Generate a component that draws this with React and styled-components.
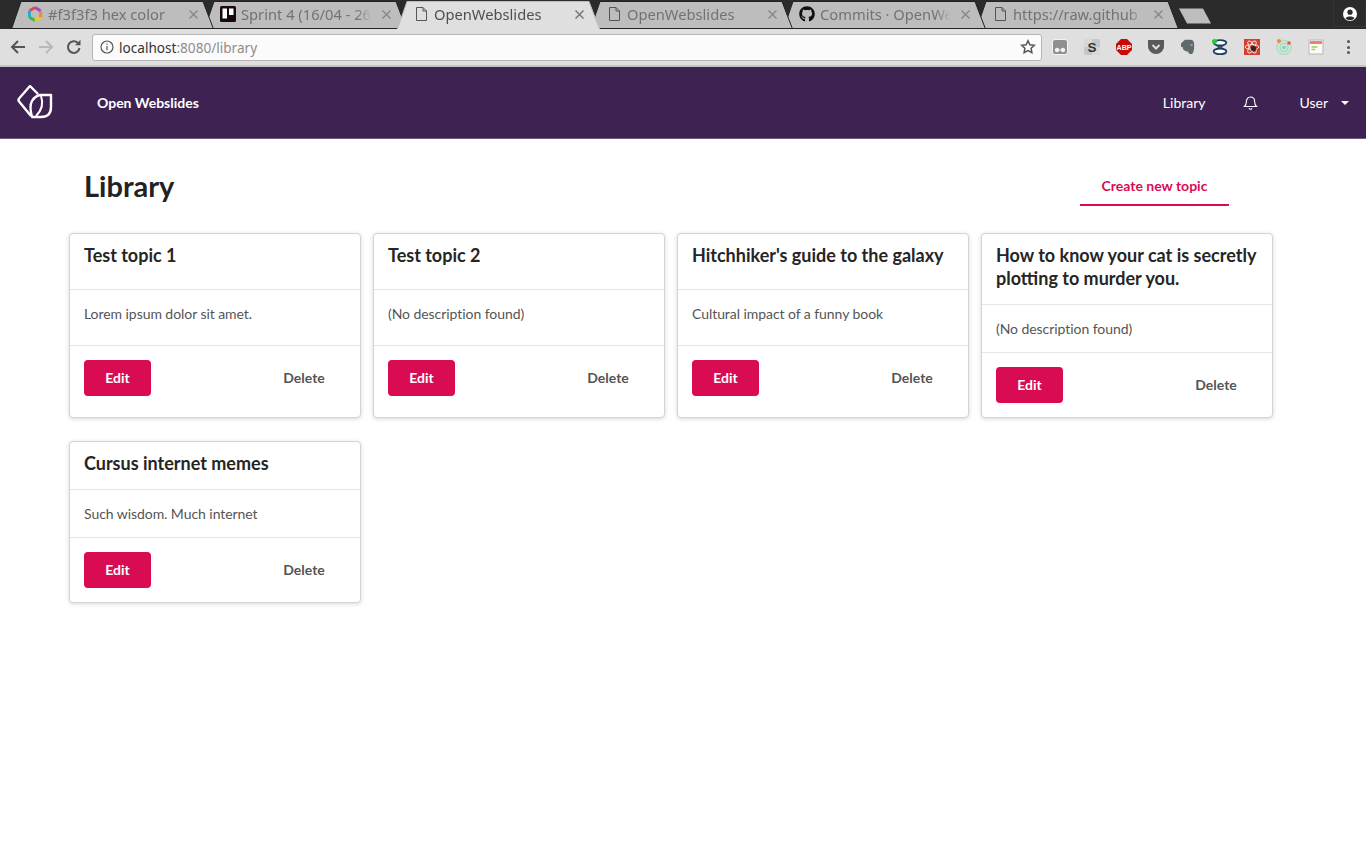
import React from "react";
import styled, { createGlobalStyle } from "styled-components";
import { FaGithub } from "react-icons/fa";

const Global = createGlobalStyle`
  html, body { margin: 0; padding: 0; background: #fff; }
  * { box-sizing: border-box; }
  body { font-family: "Lato", "Noto Sans", sans-serif; }
`;

const Page = styled.div`
  width: 1366px;
  min-height: 856px;
  background: #fff;
  display: flex;
  flex-direction: column;
`;

/* Browser chrome */
const TabStrip = styled.div`
  height: 29px;
  background: #2b2b2b;
  display: flex;
  padding-left: 11px;
  position: relative;
  border-top: 1px solid #2b2b2b;
`;
const Tab = styled.div`
  position: relative;
  width: 203px;
  height: 28px;
  margin-right: -10px;
  flex: none;
  z-index: ${(p) => (p.$active ? 20 : 10 - p.$index)};
  display: flex;
  align-items: center;
  padding: 0 14px 2px 16px;
  font: 14.7px "Noto Sans", "Open Sans", sans-serif;
  color: ${(p) => (p.$active ? "#4f4f4f" : "#727272")};
`;
const TabShape = styled.svg`
  position: absolute;
  left: 0;
  top: 0;
  width: 203px;
  height: 28px;
  z-index: -1;
`;
const TabIcon = styled.span`
  width: 16px;
  height: 16px;
  flex: none;
  display: flex;
  align-items: center;
  justify-content: center;
  color: #111;
`;
const TabTitle = styled.span`
  flex: 1;
  margin-left: 5px;
  white-space: nowrap;
  overflow: hidden;
  -webkit-mask-image: linear-gradient(to right, #000 88%, transparent 100%);
  mask-image: linear-gradient(to right, #000 88%, transparent 100%);
`;
const TabClose = styled.svg`
  width: 9px;
  height: 9px;
  flex: none;
  margin-left: 10px;
  margin-right: 2px;
`;
const NewTab = styled.svg`
  width: 33px;
  height: 16px;
  flex: none;
  margin: 7px 0 0 10px;
`;
const ProfileBox = styled.div`
  margin-left: auto;
  width: 33px;
  height: 26px;
  background: #2b2b2b;
  border: 1px solid #353535;
  border-top: 0;
  display: flex;
  align-items: center;
  justify-content: center;
`;

const Toolbar = styled.div`
  height: 38px;
  background: #dfdfdf;
  border-bottom: 2px solid #c4c4c4;
  display: flex;
  align-items: center;
  padding-left: 9px;
`;
const NavButton = styled.svg`
  width: 18px;
  height: 18px;
  flex: none;
  margin-right: 10px;
`;
const AddressBar = styled.div`
  width: 950px;
  height: 27px;
  margin-left: -1px;
  background: #fbfbfb;
  border: 1px solid #b5b5b5;
  border-radius: 3px;
  display: flex;
  align-items: center;
  padding: 0 5px 0 7px;
  font: 13.6px "Noto Sans", "Open Sans", sans-serif;
`;
const Host = styled.span`
  color: #333;
  margin-left: 5px;
`;
const UrlRest = styled.span`
  color: #8d8d8d;
`;
const Star = styled.svg`
  width: 16px;
  height: 16px;
  margin-left: auto;
`;
const Extensions = styled.div`
  display: flex;
  align-items: center;
  margin-left: 10px;
  gap: 16px;
`;
const Ext = styled.svg`
  width: 16px;
  height: 16px;
  flex: none;
`;
const MenuDots = styled.div`
  display: flex;
  flex-direction: column;
  gap: 2.5px;
  margin-left: 23px;
`;
const Dot = styled.i`
  width: 3px;
  height: 3px;
  border-radius: 50%;
  background: #555;
  display: block;
`;

/* App nav */
const TopBar = styled.header`
  height: 72px;
  background: #3e2352;
  border-bottom: 1px solid #6e5a7d;
  display: flex;
  align-items: center;
  color: #fff;
  font-size: 14px;
  padding: 0 17px;
`;
const Logo = styled.svg`
  width: 36px;
  height: 34px;
  flex: none;
  margin-bottom: 2px;
`;
const Brand = styled.a`
  font-weight: 700;
  margin-left: 44px;
`;
const NavRight = styled.nav`
  margin-left: auto;
  display: flex;
  align-items: center;
`;
const NavLink = styled.a`
  font-weight: 400;
`;
const BellIcon = styled.svg`
  width: 15px;
  height: 15px;
  margin-left: 38px;
`;
const UserMenu = styled.a`
  margin-left: 41px;
  display: flex;
  align-items: center;
`;
const Caret = styled.i`
  width: 0;
  height: 0;
  margin-left: 13px;
  border-left: 4px solid transparent;
  border-right: 4px solid transparent;
  border-top: 4px solid #fff;
`;

/* Content */
const Main = styled.main`
  padding: 28px 0 0 69px;
  width: 1273px;
`;
const PageHeader = styled.div`
  display: flex;
  align-items: center;
  justify-content: space-between;
  padding: 0 44px 0 15px;
  height: 39px;
  margin-bottom: 27px;
`;
const Title = styled.h1`
  margin: 0;
  padding-bottom: 2px;
  font-size: 29px;
  font-weight: 700;
  color: #222;
`;
const CreateButton = styled.a`
  width: 149px;
  height: 39px;
  display: flex;
  align-items: center;
  justify-content: center;
  font-size: 14px;
  font-weight: 700;
  color: #d80b53;
  border-bottom: 2px solid #d80b53;
`;
const Grid = styled.div`
  display: grid;
  grid-template-columns: repeat(4, 292px);
  column-gap: 12px;
  row-gap: 23px;
  align-items: stretch;
`;
const Card = styled.article`
  display: flex;
  flex-direction: column;
  background: #fff;
  border: 1px solid #d4d4d4;
  border-radius: 4px;
  box-shadow: 0 1px 4px rgba(0, 0, 0, 0.16);
`;
const CardHead = styled.div`
  flex: 1 1 auto;
  padding: 10px 14px 14px;
  border-bottom: 1px solid #e6e6e6;
`;
const CardTitle = styled.h2`
  margin: 0;
  font-size: 18px;
  line-height: 23px;
  font-weight: 700;
  color: #252525;
`;
const CardBody = styled.div`
  flex: 1.15 1 auto;
  padding: 14px;
  font-size: 14px;
  letter-spacing: -0.06px;
  line-height: 19px;
  color: #555;
  border-bottom: 1px solid #e6e6e6;
`;
const CardFoot = styled.div`
  flex: 0.9 1 auto;
  padding: 14px;
  display: flex;
  align-items: flex-start;
  justify-content: space-between;
`;
const EditButton = styled.button`
  width: 67px;
  height: 36px;
  border: 0;
  padding: 0 0 2px;
  border-radius: 4px;
  background: #d80b53;
  color: #fff;
  font: 700 14px "Lato", sans-serif;
`;
const DeleteButton = styled.button`
  width: 84px;
  height: 36px;
  border: 0;
  padding: 0 0 2px;
  background: transparent;
  color: #555;
  font: 700 14px "Lato", sans-serif;
`;

const PageIcon = () => (
  <svg width="13" height="16" viewBox="0 0 13 16" fill="none" stroke="#555" strokeWidth="1">
    <path d="M1.500 1.500h6.500l3.500 3.500v9.500h-10z M8 1.500v3.500h3.500" />
  </svg>
);
const ColorHex = () => (
  <svg width="16" height="16" viewBox="0 0 16 16" fill="none" strokeWidth="3">
    <path d="M8 1.500 2.400 4.700" stroke="#e8483f" />
    <path d="M2.400 4.700v6.600" stroke="#2aa7d8" />
    <path d="M2.400 11.300 8 14.500" stroke="#39b54a" />
    <path d="M8 14.500l5.600-3.200" stroke="#f7c520" />
    <path d="M13.600 11.300V4.700" stroke="#f28c28" />
    <path d="M13.600 4.700 8 1.500" stroke="#b43fc1" />
  </svg>
);
const TrelloIcon = () => (
  <svg width="16" height="16" viewBox="0 0 16 16">
    <rect width="16" height="16" rx="1.500" fill="#17090d" />
    <rect x="2.500" y="2.500" width="4.500" height="10" fill="#fff" />
    <rect x="9" y="2.500" width="4.500" height="6.500" fill="#fff" />
  </svg>
);

const tabs = [
  { title: "#f3f3f3 hex color", icon: <ColorHex /> },
  { title: "Sprint 4 (16/04 - 26/", icon: <TrelloIcon /> },
  { title: "OpenWebslides", icon: <PageIcon />, active: true },
  { title: "OpenWebslides", icon: <PageIcon /> },
  { title: "Commits · OpenWe", icon: <FaGithub size={16} /> },
  { title: "https://raw.github", icon: <PageIcon /> },
];

const cards = [
  { title: "Test topic 1", text: "Lorem ipsum dolor sit amet." },
  { title: "Test topic 2", text: "(No description found)" },
  { title: "Hitchhiker's guide to the galaxy", text: "Cultural impact of a funny book" },
  { title: "How to know your cat is secretly plotting to murder you.", text: "(No description found)" },
  { title: "Cursus internet memes", text: "Such wisdom. Much internet" },
];

export default function App() {
  return (
    <Page>
      <Global />
      <TabStrip>
        {tabs.map((t, i) => (
          <Tab key={i} $index={i} $active={t.active}>
            <TabShape viewBox="0 0 203 28">
              <path
                d="M0.500 28 L10 0.500 H192 L202.500 28"
                fill={t.active ? "#dfdfdf" : "#bdbdbd"}
                stroke={t.active ? "#bdbdbd" : "#222"}
                strokeWidth="1"
              />
              {!t.active && <path d="M0 27.500H203" stroke="#222" strokeWidth="1" />}
            </TabShape>
            <TabIcon>{t.icon}</TabIcon>
            <TabTitle>{t.title}</TabTitle>
            <TabClose viewBox="0 0 9 9" stroke={t.active ? "#777" : "#8a8a8a"} strokeWidth="1.500">
              <path d="M0.500 0.500 8.500 8.500M8.500 0.500 0.500 8.500" />
            </TabClose>
          </Tab>
        ))}
        <NewTab viewBox="0 0 33 16">
          <path d="M0 0.500H24L32 15.500H8Z" fill="#bdbdbd" />
        </NewTab>
        <ProfileBox>
          <svg width="16" height="16" viewBox="0 0 16 16">
            <circle cx="8" cy="8" r="7" fill="#fff" />
            <circle cx="8" cy="6.200" r="2.600" fill="#2b2b2b" />
            <path d="M3.500 12.200c1-2.400 8-2.400 9 0a6 6 0 0 1-9 0z" fill="#2b2b2b" />
          </svg>
        </ProfileBox>
      </TabStrip>

      <Toolbar>
        <NavButton viewBox="0 0 18 18" fill="none" stroke="#555" strokeWidth="2">
          <path d="M16 9H3M9 3 3 9l6 6" />
        </NavButton>
        <NavButton viewBox="0 0 18 18" fill="none" stroke="#b9b9b9" strokeWidth="2">
          <path d="M2 9h13M9 3l6 6-6 6" />
        </NavButton>
        <NavButton viewBox="0 0 18 18" fill="none" stroke="#555" strokeWidth="2">
          <path d="M14.500 10a5.800 5.800 0 1 1-1.600-5" />
          <path d="M15.500 1.800v5.400h-5.400z" fill="#555" stroke="none" />
        </NavButton>
        <AddressBar>
          <svg width="14" height="14" viewBox="0 0 14 14" fill="none" stroke="#555" strokeWidth="1.200">
            <circle cx="7" cy="7" r="6" />
            <path d="M7 6v4.200M7 3.400v1.400" />
          </svg>
          <Host>localhost</Host>
          <UrlRest>:8080/library</UrlRest>
          <Star viewBox="0 0 16 16" fill="none" stroke="#555" strokeWidth="1.500">
            <path d="M8 1.800l1.900 4 4.400.5-3.200 3 .8 4.400L8 11.600l-3.900 2.100.8-4.400-3.200-3 4.400-.5z" />
          </Star>
        </AddressBar>
        <Extensions>
          <Ext viewBox="0 0 16 16">
            <rect x="0.500" y="0.500" width="15" height="15" rx="2.500" fill="#8f8f8f" stroke="#f2f2f2" />
            <circle cx="5" cy="11" r="2.200" fill="#f2f2f2" />
            <circle cx="11" cy="11" r="2.200" fill="#f2f2f2" />
            <path d="M7 11h2" stroke="#f2f2f2" />
          </Ext>
          <Ext viewBox="0 0 16 16">
            <rect width="16" height="16" rx="2" fill="#c6c6c6" />
            <path d="M0 0h8v8H0zM8 8h8v8H8z" fill="#d8d8d8" />
            <text x="8" y="13" textAnchor="middle" fontFamily="Liberation Sans, sans-serif" fontWeight="700" fontSize="13.500" fill="#333">S</text>
          </Ext>
          <Ext viewBox="0 0 16 16">
            <path d="M5 0h6l5 5v6l-5 5H5l-5-5V5z" fill="#c60a0a" />
            <text x="8" y="11.200" textAnchor="middle" fontFamily="Liberation Sans, sans-serif" fontWeight="700" fontSize="8" textLength="15" lengthAdjust="spacingAndGlyphs" fill="#fff">ABP</text>
          </Ext>
          <Ext viewBox="0 0 16 16">
            <path d="M0 1h16v6.500a8 7.500 0 0 1-16 0z" fill="#5a5a5a" />
            <path d="M4.500 6 8 9.500 11.500 6" fill="none" stroke="#ddd" strokeWidth="2" />
          </Ext>
          <Ext viewBox="0 0 16 16">
            <path d="M2.500 3 5 .8h5.500c2.500 0 3.700 1.700 3.700 5.200 0 4-.5 8.500-2.700 9-2 .4-3-.8-3.500-2.500-2.200 0-5-1-5.500-4.500H1V4.500z" fill="#5f6a6c" />
            <path d="M10.500 6h2" stroke="#d8d8d8" />
          </Ext>
          <Ext viewBox="0 0 16 16" fill="none">
            <ellipse cx="8" cy="3.800" rx="6.300" ry="2.700" fill="#fff" stroke="#1c3f63" strokeWidth="1.800" />
            <ellipse cx="8" cy="12.400" rx="6.300" ry="2.700" fill="#fff" stroke="#1c3f63" strokeWidth="1.800" />
            <path d="M4 6.500 8 8.100 12 6.500M4 9.700 8 8.100 12 9.700" stroke="#1c3f63" strokeWidth="1" />
            <circle cx="2.500" cy="2.500" r="2.500" fill="#1fcf3a" />
          </Ext>
          <Ext viewBox="0 0 16 16" fill="none">
            <rect width="16" height="16" fill="#d1402f" />
            <ellipse cx="8" cy="8" rx="6.800" ry="2.500" stroke="#f7ddd8" transform="rotate(60 8 8)" />
            <ellipse cx="8" cy="8" rx="6.800" ry="2.500" stroke="#f7ddd8" transform="rotate(-60 8 8)" />
            <ellipse cx="8" cy="8" rx="6.800" ry="2.500" stroke="#f7ddd8" />
            <circle cx="9.500" cy="9.500" r="2.800" fill="#3a2420" />
          </Ext>
          <Ext viewBox="0 0 16 16" fill="none">
            <circle cx="8" cy="8.500" r="7" stroke="#9fe6c2" strokeWidth="1.500" />
            <circle cx="8" cy="8.500" r="4" stroke="#8fdcb8" strokeWidth="1.200" />
            <circle cx="8" cy="8.500" r="1.800" fill="#6fdc9f" />
            <circle cx="3" cy="2" r="2" fill="#ef8a3c" />
            <circle cx="13" cy="4" r="1.800" fill="#e8553a" />
          </Ext>
          <Ext viewBox="0 0 16 16">
            <rect x="1" y="1" width="14" height="14" fill="#fafafa" stroke="#b9b9b9" />
            <rect x="2" y="2" width="12" height="3" fill="#ef7f7f" />
            <path d="M3.500 8h6M3.500 10.500h3.500" stroke="#9bd64a" strokeWidth="1.400" />
          </Ext>
        </Extensions>
        <MenuDots>
          <Dot />
          <Dot />
          <Dot />
        </MenuDots>
      </Toolbar>

      <TopBar>
        <Logo viewBox="17 85 36 34" fill="none" stroke="#fff" strokeWidth="2.400" strokeLinejoin="round">
          <path d="M38 94 30 86 19.500 98Q17.500 100 19.500 102L31 116" />
          <path d="M40 95H51V107Q51 117 41 117H32Q29 106 32 101 35 96 40 95Z" />
          <path d="M41 96Q45 107 36 116" strokeWidth="2" />
        </Logo>
        <Brand>Open Webslides</Brand>
        <NavRight>
          <NavLink>Library</NavLink>
          <BellIcon viewBox="0 0 15 15" fill="none" stroke="#fff" strokeWidth="1.100">
            <path d="M1.500 11.500c1.300-1 1.800-2 1.800-4.500 0-3 1.800-5 4.200-5s4.200 2 4.200 5c0 2.500.5 3.500 1.800 4.500z" />
            <path d="M6 13.200a1.600 1.600 0 0 0 3 0" />
          </BellIcon>
          <UserMenu>
            User
            <Caret />
          </UserMenu>
        </NavRight>
      </TopBar>

      <Main>
        <PageHeader>
          <Title>Library</Title>
          <CreateButton>Create new topic</CreateButton>
        </PageHeader>
        <Grid>
          {cards.map((c) => (
            <Card key={c.title}>
              <CardHead>
                <CardTitle>{c.title}</CardTitle>
              </CardHead>
              <CardBody>{c.text}</CardBody>
              <CardFoot>
                <EditButton>Edit</EditButton>
                <DeleteButton>Delete</DeleteButton>
              </CardFoot>
            </Card>
          ))}
        </Grid>
      </Main>
    </Page>
  );
}
